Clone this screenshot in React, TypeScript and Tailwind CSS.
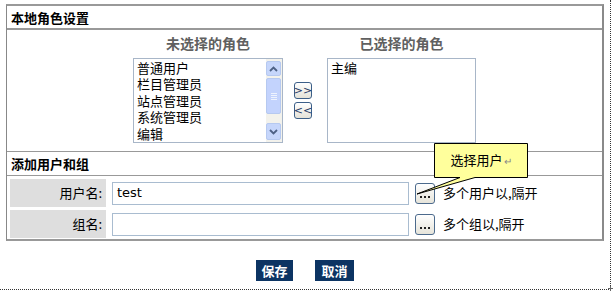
import React from "react";

const font = { fontFamily: '"Noto Sans CJK SC", "Liberation Sans", sans-serif' };

function UpArrow() {
  return (
    <svg width="9" height="6" viewBox="0 0 9 6">
      <path d="M1 5 L4.5 1.5 L8 5" stroke="#4d6185" strokeWidth="1.8" fill="none" />
    </svg>
  );
}
function DownArrow() {
  return (
    <svg width="9" height="6" viewBox="0 0 9 6">
      <path d="M1 1 L4.5 4.5 L8 1" stroke="#4d6185" strokeWidth="1.8" fill="none" />
    </svg>
  );
}

function Scrollbar() {
  return (
    <div className="flex flex-col w-[16px] h-full bg-[#f3f2ec] py-[2px] pr-[1px]">
      <div className="h-[15px] rounded-[2px] border border-[#b6c9f0] bg-[#c6d6fb] flex items-center justify-center">
        <UpArrow />
      </div>
      <div className="mt-[2px] h-[36px] rounded-[2px] border border-[#b6c9f0] bg-[#c3d3fd] flex flex-col items-center justify-center gap-[1px]">
        <div className="w-[6px] h-px bg-[#eef3fe]" />
        <div className="w-[6px] h-px bg-[#eef3fe]" />
        <div className="w-[6px] h-px bg-[#eef3fe]" />
        <div className="w-[6px] h-px bg-[#eef3fe]" />
      </div>
      <div className="flex-1" />
      <div className="h-[17px] rounded-[2px] border border-[#b6c9f0] bg-[#c6d6fb] flex items-center justify-center">
        <DownArrow />
      </div>
    </div>
  );
}

function SmallBtn({ children }: { children: React.ReactNode }) {
  return (
    <div className="w-[18px] h-[17px] rounded-[3px] border border-[#3c5f88] bg-gradient-to-b from-white to-[#e4e2d8] flex items-center justify-center text-[11px] leading-none text-[#1f3a66]" style={{ fontFamily: '"DejaVu Sans", sans-serif' }}>
      {children}
    </div>
  );
}

function DotsBtn() {
  return (
    <div className="ml-[6px] w-[20px] h-[21px] rounded-[3px] border border-[#4c6a8c] bg-gradient-to-b from-white to-[#e6e4da] flex items-end justify-center pb-[5px] gap-[2px]">
      <div className="w-[2px] h-[2px] bg-[#222]" />
      <div className="w-[2px] h-[2px] bg-[#222]" />
      <div className="w-[2px] h-[2px] bg-[#222]" />
    </div>
  );
}

export default function App() {
  return (
    <div className="relative w-[616px] h-[292px] bg-white text-[13px] text-black" style={font}>
      <div className="w-[611px] h-[290px] border-r border-b border-dotted border-[#333]">
        <div className="pt-[4px] pl-[6px]">
          <div className="relative w-[598px] h-[237px] border-t-2 border-l border-r-2 border-b-2 border-t-[#999] border-l-[#888] border-r-[#8a8a8a] border-b-[#999]">
            {/* header 1 */}
            <div className="h-[22px] flex items-center pl-[4px] font-bold text-[13px] leading-none">本地角色设置</div>
            <div className="h-[2px] bg-[#999]" />
            {/* role area */}
            <div className="h-[121px] flex justify-center pt-[3px]">
              <div className="flex flex-col items-center w-[150px]">
                <div className="h-[20px] text-[14px] font-bold text-[#606060] leading-[20px]">未选择的角色</div>
                <div className="mt-[5px] w-[150px] h-[85px] border border-[#a8b6c8] flex">
                  <div className="flex-1 pl-[3px] pt-[1px] leading-[16.4px] text-[13px]">
                    <div>普通用户</div>
                    <div>栏目管理员</div>
                    <div>站点管理员</div>
                    <div>系统管理员</div>
                    <div>编辑</div>
                  </div>
                  <Scrollbar />
                </div>
              </div>
              <div className="ml-[11px] mr-[15px] mt-[49px] flex flex-col gap-[3px]">
                <SmallBtn>&gt;&gt;</SmallBtn>
                <SmallBtn>&lt;&lt;</SmallBtn>
              </div>
              <div className="flex flex-col items-center w-[149px]">
                <div className="h-[20px] text-[14px] font-bold text-[#606060] leading-[20px]">已选择的角色</div>
                <div className="mt-[5px] w-[149px] h-[85px] border border-[#a8b6c8] pl-[3px] pt-[1px] text-[13px] leading-[16.4px]">
                  主编
                </div>
              </div>
            </div>
            <div className="h-px bg-[#999]" />
            {/* header 2 */}
            <div className="h-[23px] flex items-center pl-[4px] font-bold text-[13px] leading-none">添加用户和组</div>
            <div className="h-px bg-[#999]" />
            {/* rows */}
            <div className="flex flex-col gap-[3px] pt-[3px] pl-[3px]">
              <div className="flex h-[28px]">
                <div className="w-[96px] bg-[#dedede] flex items-center justify-end pr-[4px] text-[13px]">用户名:</div>
                <div className="flex items-center pl-[6px]">
                  <div className="w-[297px] h-[23px] border border-[#a9bcd0] flex items-center pl-[4px] text-[13px]" style={{ fontFamily: '"DejaVu Sans", sans-serif' }}>test</div>
                  <DotsBtn />
                  <div className="ml-[8px] text-[13px]">多个用户以,隔开</div>
                </div>
              </div>
              <div className="flex h-[28px]">
                <div className="w-[96px] bg-[#dedede] flex items-center justify-end pr-[4px] text-[13px]">组名:</div>
                <div className="flex items-center pl-[6px]">
                  <div className="w-[297px] h-[23px] border border-[#a9bcd0]" />
                  <DotsBtn />
                  <div className="ml-[8px] text-[13px]">多个组以,隔开</div>
                </div>
              </div>
            </div>
          </div>
          {/* buttons */}
          <div className="w-[598px] flex justify-center gap-[22px] mt-[19px]">
            <div className="w-[37px] h-[21px] bg-[#0c3463] text-white font-bold text-[13px] flex items-center justify-center leading-none">保存</div>
            <div className="w-[39px] h-[21px] bg-[#0c3463] text-white font-bold text-[13px] flex items-center justify-center leading-none">取消</div>
          </div>
        </div>
      </div>
      {/* tooltip callout */}
      <div className="absolute left-[405px] top-[142px] w-[130px] h-[60px]">
        <svg width="130" height="60" viewBox="0 0 130 60" className="absolute left-0 top-0">
          <path d="M29.5 1.5 H122.5 V35.5 H70 L12 52 L55 35.5 H29.5 Z" fill="#ffff9c" stroke="#000" strokeWidth="1" />
        </svg>
        <div className="absolute left-[29px] top-[1px] w-[94px] h-[34px] flex items-center justify-center text-[13px]">
          选择用户<span className="text-[10px] text-[#888] ml-[1px]">↵</span>
        </div>
      </div>
      <div className="absolute left-[607px] top-[286px] w-[7px] h-[5px]">
        <div className="absolute left-[3px] top-0 w-px h-[5px] bg-[#666]" />
        <div className="absolute left-[1px] top-[2px] w-[5px] h-px bg-[#666]" />
      </div>
    </div>
  );
}
